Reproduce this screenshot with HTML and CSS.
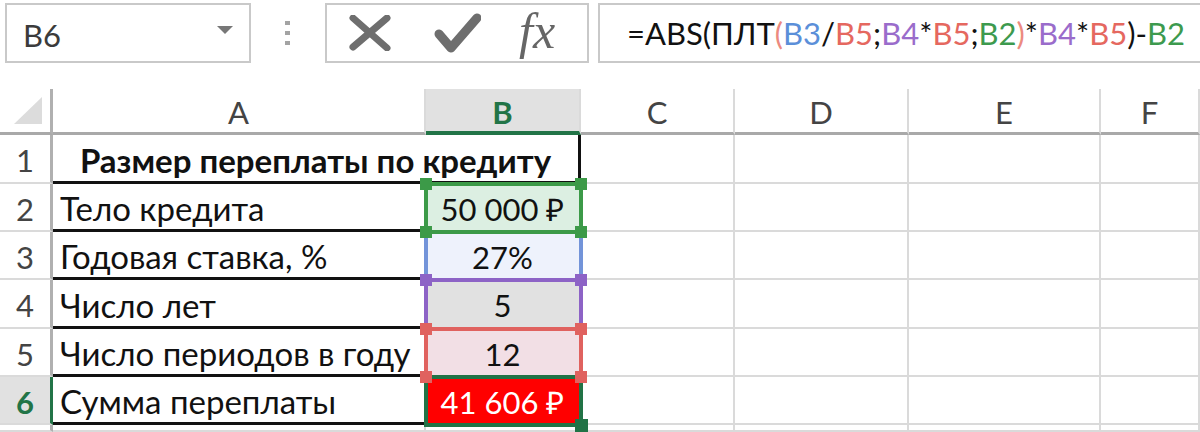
FILE: index.html
```html
<!DOCTYPE html>
<html lang="ru">
<head>
  <meta charset="UTF-8">
  <title>Размер переплаты по кредиту</title>
  <link rel="stylesheet" href="styles.css">
</head>
<body>
  <div class="toolbar">
    <div class="namebox">
      <span class="cellname">B6</span>
      <span class="drop"></span>
    </div>
    <div class="grip"><i></i><i></i><i></i></div>
    <div class="fxbox">
      <svg class="ico-x" viewBox="0 0 42 36">
        <path d="M4 3 L38 33 M38 3 L4 32" stroke="#6e6e6e" stroke-width="7" stroke-linecap="round" fill="none"/>
      </svg>
      <svg class="ico-check" viewBox="0 0 47 41">
        <path d="M5 21 L17 35 L43 5" stroke="#6e6e6e" stroke-width="9" stroke-linecap="round" stroke-linejoin="round" fill="none"/>
      </svg>
      <span class="fx">fx</span>
    </div>
    <div class="formula">=ABS(ПЛТ<span class="paren">(</span><span class="r-blue">B3</span>/<span class="r-red">B5</span>;<span class="r-purple">B4</span>*<span class="r-red">B5</span>;<span class="r-green">B2</span><span class="paren">)</span>*<span class="r-purple">B4</span>*<span class="r-red">B5</span>)-<span class="r-green">B2</span></div>
  </div>

  <div class="sheet">
    <div class="corner"><span class="tri"></span></div>
    <div class="hd">A</div>
    <div class="hd sel">B</div>
    <div class="hd">C</div>
    <div class="hd">D</div>
    <div class="hd">E</div>
    <div class="hd">F</div>

    <div class="rh">1</div>
    <div class="lbl title">Размер переплаты по кредиту</div>
    <div class="gc"></div><div class="gc"></div><div class="gc"></div><div class="gc"></div>

    <div class="rh">2</div>
    <div class="lbl">Тело кредита</div>
    <div class="val fill-green">50 000 ₽<span class="ref green"><i class="tl"></i><i class="tr"></i><i class="bl"></i><i class="br"></i></span></div>
    <div class="gc"></div><div class="gc"></div><div class="gc"></div><div class="gc"></div>

    <div class="rh">3</div>
    <div class="lbl">Годовая ставка, %</div>
    <div class="val fill-blue">27%<span class="ref blue"><i class="tl"></i><i class="tr"></i><i class="bl"></i><i class="br"></i></span></div>
    <div class="gc"></div><div class="gc"></div><div class="gc"></div><div class="gc"></div>

    <div class="rh">4</div>
    <div class="lbl">Число лет</div>
    <div class="val fill-grey">5<span class="ref purple"><i class="tl"></i><i class="tr"></i><i class="bl"></i><i class="br"></i></span></div>
    <div class="gc"></div><div class="gc"></div><div class="gc"></div><div class="gc"></div>

    <div class="rh">5</div>
    <div class="lbl">Число периодов в году</div>
    <div class="val fill-pink">12<span class="ref red"><i class="tl"></i><i class="tr"></i><i class="bl"></i><i class="br"></i></span></div>
    <div class="gc"></div><div class="gc"></div><div class="gc"></div><div class="gc"></div>

    <div class="rh active">6</div>
    <div class="lbl">Сумма переплаты</div>
    <div class="val result">41 606 ₽<span class="cursor"><i class="handle"></i></span></div>
    <div class="gc"></div><div class="gc"></div><div class="gc"></div><div class="gc"></div>

    <div class="rh"></div>
    <div class="gc"></div><div class="gc"></div><div class="gc"></div><div class="gc"></div><div class="gc"></div><div class="gc"></div>
  </div>
</body>
</html>
```

FILE: styles.css
```css
body {
  margin: 0;
  width: 1200px;
  height: 432px;
  overflow: hidden;
  background: #fff;
  color: #111;
  font-family: Lato, "Liberation Sans", sans-serif;
}

/* formula bar */
.toolbar {
  display: flex;
  height: 60px;
  margin-top: 3px;
  padding-left: 5px;
}
.namebox {
  box-sizing: border-box;
  width: 246px;
  border: 2px solid #c9c9c9;
  display: flex;
  align-items: center;
  justify-content: space-between;
  padding: 0 16px 0 16px;
}
.cellname {
  font-size: 31px;
  color: #3b3b3b;
  margin-top: 3px;
}
.drop {
  width: 0;
  height: 0;
  border-left: 8px solid transparent;
  border-right: 8px solid transparent;
  border-top: 8px solid #777;
  margin-top: -6px;
}
.grip {
  width: 5px;
  margin: 0 35px 0 34px;
  display: flex;
  flex-direction: column;
  justify-content: center;
  gap: 6px;
}
.grip i {
  width: 5px;
  height: 4px;
  background: #a3a3a3;
}
.fxbox {
  box-sizing: border-box;
  width: 264px;
  border: 2px solid #c9c9c9;
  display: flex;
  align-items: center;
  padding-left: 22px;
}
.ico-x {
  width: 42px;
  height: 36px;
  margin-right: 43px;
}
.ico-check {
  width: 47px;
  height: 41px;
  margin-right: 38px;
}
.fx {
  font-family: "Liberation Serif", serif;
  font-style: italic;
  font-size: 50px;
  color: #666;
  margin-top: -4px;
}
.formula {
  flex: 1;
  margin-left: 9px;
  border: 2px solid #c9c9c9;
  border-right: 0;
  display: flex;
  align-items: center;
  padding-left: 27px;
  font-size: 31px;
  white-space: nowrap;
}
.paren { color: #ec8a80; }
.r-blue { color: #5b8fd9; }
.r-red { color: #e5685f; }
.r-purple { color: #9a6ccb; }
.r-green { color: #3d9a4e; }

/* sheet */
.sheet {
  display: grid;
  margin-top: 26px;
  height: 343px;
  grid-template-columns: 53px 373px 155px 154px 174px 192px 1fr;
  grid-template-rows: 46px 49px 48px 48px 49px 48px 48px 1fr;
  font-size: 33px;
}
.sheet > div {
  box-sizing: border-box;
  border-right: 2px solid #dadada;
  border-bottom: 2px solid #dadada;
  display: flex;
  align-items: center;
  padding-top: 3px;
}
.sheet > .corner {
  border-bottom: 3px solid #a9a9a9;
  border-right: 3px solid #b0b0b0;
  justify-content: flex-end;
  align-items: flex-end;
  padding: 0 8px 8px 0;
}
.tri {
  width: 28px;
  height: 27px;
  background: #dcdcdc;
  clip-path: polygon(100% 0, 100% 100%, 0 100%);
}
.sheet > .hd {
  justify-content: center;
  color: #444;
  font-size: 31px;
  border-bottom: 3px solid #a9a9a9;
}
.sheet > .hd.sel {
  background: #e1e1e1;
  color: #227447;
  font-weight: bold;
  border-bottom: 4px solid #227447;
}
.sheet > .rh {
  justify-content: center;
  color: #444;
  font-size: 31px;
  border-right: 3px solid #b0b0b0;
}
.sheet > .rh.active {
  background: #e1e1e1;
  color: #227447;
  font-weight: bold;
  border-right-color: #227447;
}
.sheet > .lbl {
  padding-left: 7px;
  border-bottom: 3px solid #111;
}
.sheet > .title {
  grid-column: span 2;
  justify-content: center;
  font-weight: bold;
  border-right: 3px solid #111;
  padding-left: 0;
}
.sheet > .val {
  position: relative;
  justify-content: center;
  font-size: 31px;
}
.fill-green { background: #dcefe2; }
.fill-blue { background: #eef2fc; }
.fill-grey { background: #e1e1e1; }
.fill-pink { background: #f2dfe5; }
.sheet > .result {
  background: #ff0000;
  color: #fff;
}

/* reference highlights drawn over the B cells */
.ref, .cursor {
  position: absolute;
  inset: -2px -4px -4px -2px;
  border: 4px solid;
}
.ref i {
  position: absolute;
  width: 12px;
  height: 12px;
  background: currentColor;
}
.ref .tl { top: -8px; left: -8px; }
.ref .tr { top: -8px; right: -8px; }
.ref .bl { bottom: -8px; left: -8px; }
.ref .br { bottom: -8px; right: -8px; }
.ref.blue { color: #7394d9; z-index: 1; }
.ref.green { color: #3c9a48; z-index: 2; }
.ref.purple { color: #8d63c6; z-index: 3; }
.ref.red { color: #e0625f; z-index: 5; border-bottom-color: transparent; }
.cursor {
  border-color: #217346;
  z-index: 4;
}
.handle {
  position: absolute;
  right: -9px;
  bottom: -9px;
  width: 13px;
  height: 13px;
  background: #217346;
  z-index: 6;
}
```
